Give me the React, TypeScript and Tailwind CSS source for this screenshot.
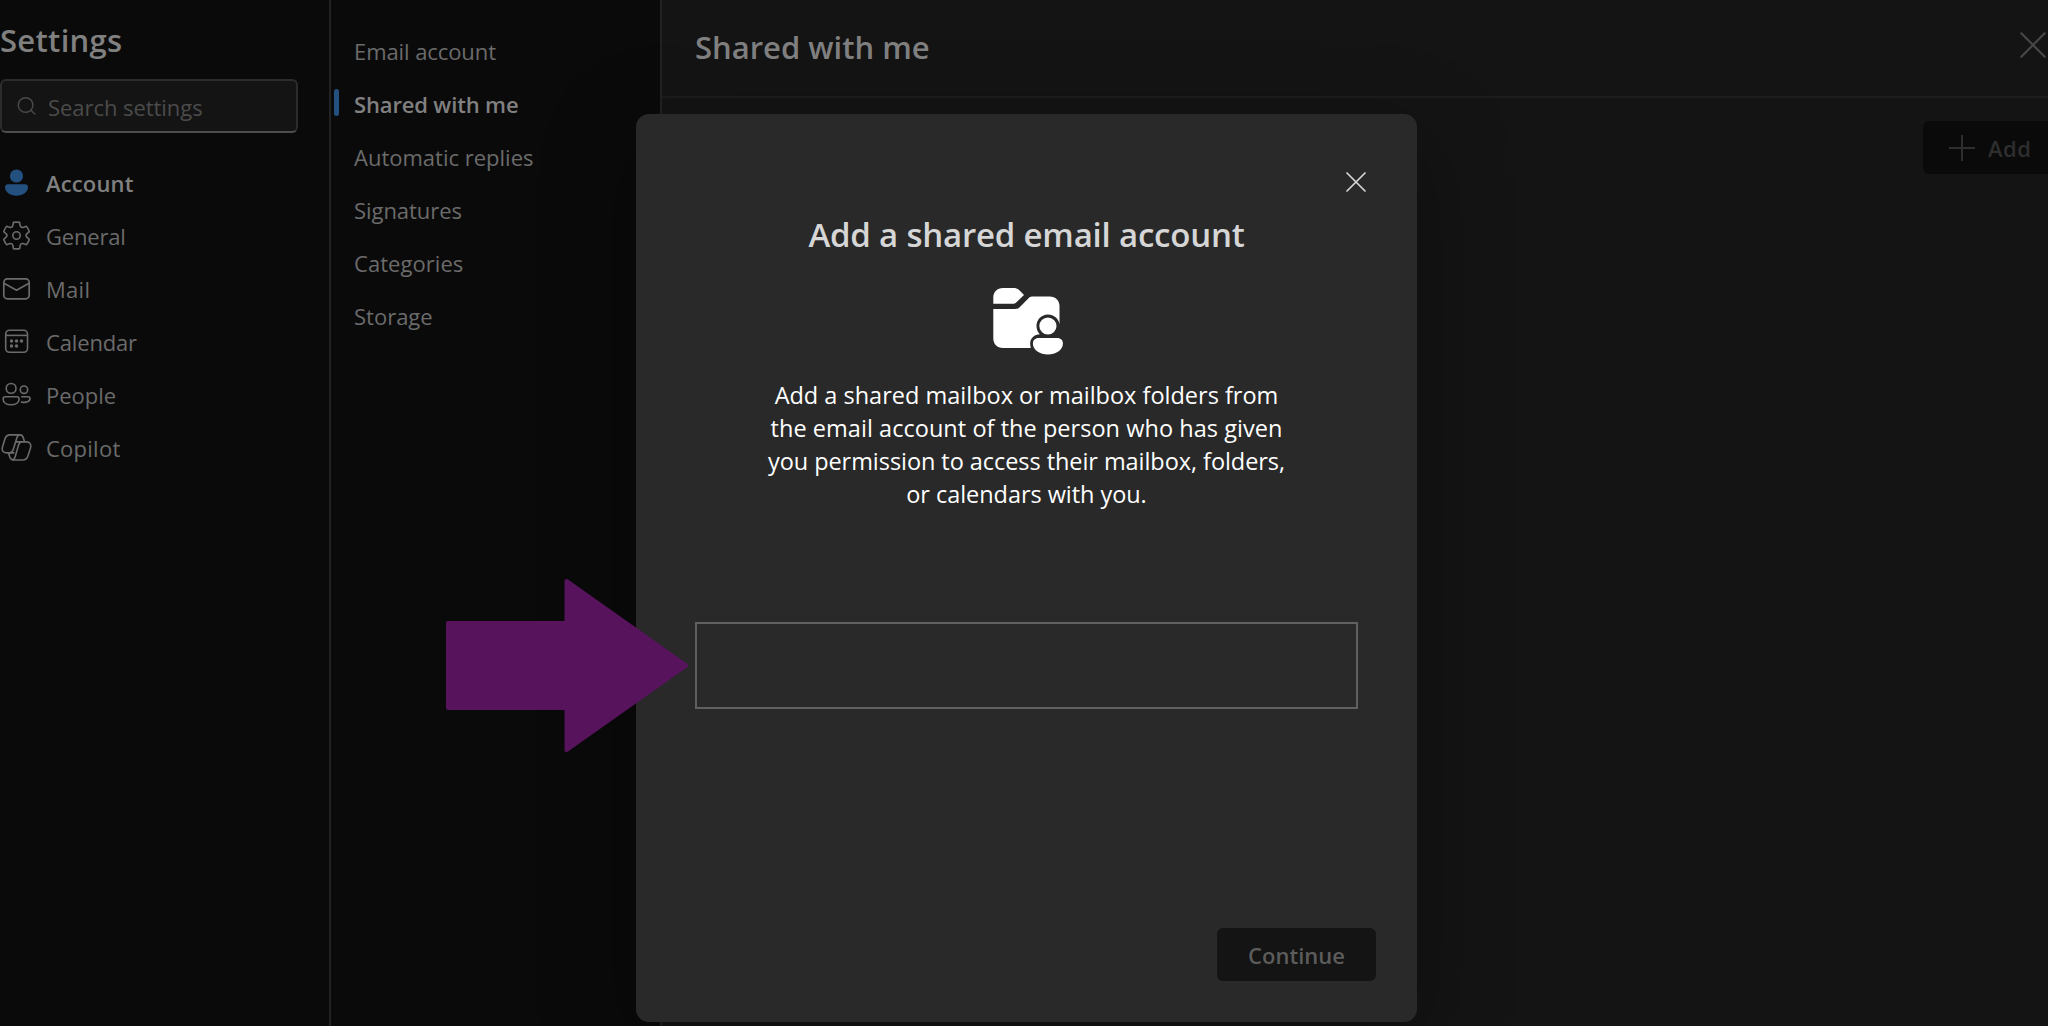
import { ReactNode } from 'react';
import clsx from 'clsx';

interface IconProps {
  className?: string;
}

function PersonIcon({ className }: IconProps) {
  return (
    <svg viewBox="0 0 32 32" className={className} fill="currentColor">
      <circle cx="16.5" cy="9" r="6.6" />
      <path d="M8 17.3H25C26.7 17.3 28 18.5 28 20.1C28 25.3 23 28.7 16.5 28.7C10 28.7 5 25.3 5 20.1C5 18.5 6.3 17.3 8 17.3Z" />
    </svg>
  );
}

function GearIcon({ className }: IconProps) {
  return (
    <svg viewBox="0 0 32 32" className={className} fill="none" stroke="currentColor" strokeWidth="1.6" strokeLinejoin="round">
      <path d="M13.4 2.4Q16.5 1.8 19.6 2.4L20.2 5.8Q20.9 7.8 23 7.4L26.3 6.3Q28.5 8.7 29.3 11.7L26.8 13.8Q25.3 15.5 26.8 17.2L29.3 19.3Q28.5 22.3 26.3 24.7L23 23.6Q20.9 23.2 20.2 25.2L19.6 28.6Q16.5 29.2 13.4 28.6L12.8 25.2Q12.1 23.2 10 23.6L6.7 24.7Q4.5 22.3 3.7 19.3L6.2 17.2Q7.7 15.5 6.2 13.8L3.7 11.7Q4.5 8.7 6.7 6.3L10 7.4Q12.1 7.8 12.8 5.8Z" />
      <circle cx="16.5" cy="15.5" r="3.7" />
    </svg>
  );
}

function MailIcon({ className }: IconProps) {
  return (
    <svg viewBox="0 0 32 32" className={className} fill="none" stroke="currentColor" strokeWidth="1.7" strokeLinejoin="round">
      <rect x="3.8" y="5.8" width="25.4" height="20" rx="3.6" />
      <path d="M4 10.3L16.5 17.2L29 10.3" />
    </svg>
  );
}

function CalendarIcon({ className }: IconProps) {
  return (
    <svg viewBox="0 0 32 32" className={className} fill="none" stroke="currentColor" strokeWidth="1.6">
      <rect x="5.7" y="4.3" width="21.8" height="22" rx="3.8" />
      <path d="M5.7 9.4H27.5" />
      <g fill="currentColor" stroke="none">
        <circle cx="11.5" cy="15.1" r="1.75" />
        <circle cx="16.5" cy="15.1" r="1.75" />
        <circle cx="21.5" cy="15.1" r="1.75" />
        <circle cx="11.5" cy="20.1" r="1.75" />
        <circle cx="16.5" cy="20.1" r="1.75" />
      </g>
    </svg>
  );
}

function PeopleIcon({ className }: IconProps) {
  return (
    <svg viewBox="0 0 32 32" className={className} fill="none" stroke="currentColor" strokeWidth="1.6" strokeLinecap="round">
      <circle cx="11.1" cy="9.4" r="4.9" />
      <circle cx="24" cy="10.7" r="3.7" />
      <path d="M5.5 17.7H16.7C18.1 17.7 19.1 18.7 19.1 19.9C19.1 23.9 15.3 25.7 11.1 25.7C6.9 25.7 3.1 23.9 3.1 19.9C3.1 18.7 4.1 17.7 5.5 17.7Z" />
      <path d="M21.8 17.7H28C29.2 17.7 30 18.5 30 19.6C30 22.9 26.4 23.8 21.6 23.1" />
    </svg>
  );
}

function CopilotIcon({ className }: IconProps) {
  return (
    <svg viewBox="0 0 32 32" className={className} fill="none" stroke="currentColor" strokeWidth="1.6" strokeLinejoin="round">
      <path d="M9.8 2.9H20C21.9 2.9 22.8 4.1 23.3 5.7L24.6 9.9H26.4C30 9.9 31.4 12.7 30.5 15.9L28 23.7C27.1 26.6 25.4 28 22.8 28H13.2C11.1 28 10.3 26.6 9.8 25.1L8.5 20.9H6.4C2.8 20.9 1.6 18.2 2.5 15L4.8 7.3C5.7 4.3 7.3 2.9 9.8 2.9Z" />
      <path d="M20 2.9C18.2 2.9 17.4 4.1 16.9 5.7L13.4 17C12.6 19.7 11.4 20.9 8.5 20.9" />
      <path d="M24.6 9.9H22C20.2 9.9 19.2 11 18.6 12.9L15.3 24.3C14.7 26.5 14.2 28 12.4 28" />
      <path d="M15.6 9.9H22M8.5 20.9H14.4" />
    </svg>
  );
}

function SearchIcon({ className }: IconProps) {
  return (
    <svg viewBox="0 0 20 20" className={className} fill="none" stroke="currentColor" strokeWidth="1.4" strokeLinecap="round">
      <circle cx="8.6" cy="9" r="7.3" />
      <path d="M13.8 14.2L17.9 18" />
    </svg>
  );
}

function SharedFolderIcon({ className }: IconProps) {
  return (
    <svg viewBox="0 0 72 68" className={className} fill="currentColor">
      <path d="M1.3 16.7V10.5C1.3 5 5.3 1 10.8 1H21.5C24 1 25.8 1.8 27.6 3.5L32 8L24.2 15.6C23.4 16.4 22.8 16.7 21.8 16.7Z" />
      <path d="M1.3 22H22.8C25 22 26.4 21.4 27.9 19.9L36.3 11.4C37.5 10.2 38.5 9.5 40 9.5H57.7C63.5 9.5 67.5 13.4 67.5 19V37.5C66.8 31.9 61.9 27.6 55.9 27.6C49.6 27.6 44.5 32.7 44.5 39C44.5 42.3 45.7 45 47.8 47.2C42.5 47.4 38.2 51 38.2 56.5C38.2 58.1 38.4 59.5 38.8 61H10.8C5.3 61 1.3 57 1.3 51.5Z" />
      <circle cx="55.9" cy="39" r="8.6" />
      <path d="M46.5 51H65.3C68.7 51 70.9 53.3 70.9 56.4C70.9 63.2 63.7 67.4 55.9 67.4C48.1 67.4 40.9 63.2 40.9 56.4C40.9 53.3 43.1 51 46.5 51Z" />
    </svg>
  );
}

function CloseIcon({ className }: IconProps) {
  return (
    <svg viewBox="0 0 26 26" className={className} fill="none" stroke="currentColor" strokeWidth="2.2" strokeLinecap="round">
      <path d="M1.3 1.3L24.7 24.7M24.7 1.3L1.3 24.7" />
    </svg>
  );
}

interface NavItem {
  label: string;
  icon: ReactNode;
  tracking: string;
  active?: boolean;
}

const iconSize = 'h-8 w-8 shrink-0';

const navItems: NavItem[] = [
  { label: 'Account', icon: <PersonIcon className={clsx(iconSize, 'text-[#24507f]')} />, tracking: 'tracking-[0.15px]', active: true },
  { label: 'General', icon: <GearIcon className={iconSize} />, tracking: 'tracking-[-0.2px]' },
  { label: 'Mail', icon: <MailIcon className={iconSize} />, tracking: 'tracking-[0.3px]' },
  { label: 'Calendar', icon: <CalendarIcon className={iconSize} />, tracking: 'tracking-[-0.15px]' },
  { label: 'People', icon: <PeopleIcon className={iconSize} />, tracking: 'tracking-normal' },
  { label: 'Copilot', icon: <CopilotIcon className={iconSize} />, tracking: 'tracking-[0.25px]' },
];

const accountPages = [
  { label: 'Email account', tracking: 'tracking-[-0.08px]' },
  { label: 'Shared with me', tracking: 'tracking-[-0.15px]', active: true },
  { label: 'Automatic replies', tracking: 'tracking-normal' },
  { label: 'Signatures', tracking: 'tracking-[-0.05px]' },
  { label: 'Categories', tracking: 'tracking-[0.05px]' },
  { label: 'Storage', tracking: 'tracking-normal' },
];

const description = [
  { text: 'Add a shared mailbox or mailbox folders from', tracking: 'tracking-normal' },
  { text: 'the email account of the person who has given', tracking: 'tracking-[0.04px]' },
  { text: 'you permission to access their mailbox, folders,', tracking: 'tracking-[-0.06px]' },
  { text: 'or calendars with you.', tracking: 'tracking-[-0.05px]' },
];

function Sidebar() {
  return (
    <aside className="w-[331px] shrink-0 border-r-2 border-[#222222] bg-[#0a0a0a]">
      <h1 className="flex h-[79px] items-center pt-[2px] text-[31px] font-semibold tracking-[0.3px] text-[#808080]">
        Settings
      </h1>
      <div className="flex h-[54px] w-[298px] items-center gap-[11px] rounded-md border-2 border-[#2c2c2c] border-b-[#4d4d4d] bg-[#141414] pl-[15px]">
        <SearchIcon className="h-5 w-5 text-[#4b4b4b]" />
        <span className="pt-[2px] text-[22px] tracking-[-0.05px] text-[#4b4b4b]">Search settings</span>
      </div>
      <nav className="mt-[23px]">
        {navItems.map((item) => (
          <div
            key={item.label}
            className={clsx(
              'flex h-[53px] items-center gap-[14px] text-[22px]',
              item.active ? 'font-semibold text-[#808080]' : 'text-[#6b6b6b]'
            )}
          >
            {item.icon}
            <span className={clsx('pt-[2px]', item.tracking)}>{item.label}</span>
          </div>
        ))}
      </nav>
    </aside>
  );
}

function AccountPages() {
  return (
    <nav className="w-[331px] shrink-0 border-r-2 border-[#222222] bg-[#0a0a0a] pt-6">
      {accountPages.map((page) => (
        <div
          key={page.label}
          className={clsx(
            'flex h-[53px] items-center pl-[3px] text-[22px]',
            page.active ? 'font-semibold text-[#808080]' : 'text-[#6b6b6b]'
          )}
        >
          <span className={clsx('mb-[2px] h-[27px] w-[5px] rounded-full', page.active && 'bg-[#24507f]')} />
          <span className={clsx('ml-[15px] pt-[2px]', page.tracking)}>{page.label}</span>
        </div>
      ))}
    </nav>
  );
}

function SharedWithMe() {
  return (
    <main className="flex-1 bg-[#141414]">
      <header className="flex h-[98px] items-center justify-between border-b-2 border-[#1d1d1d] pr-[2px] pl-[33px]">
        <h2 className="pb-[2px] text-[31px] font-semibold text-[#808080]">Shared with me</h2>
        <CloseIcon className="mb-[6px] h-[26px] w-[26px] text-[#474747]" />
      </header>
      <div className="flex justify-end pt-[23px]">
        <button className="flex h-[53px] w-[125px] items-center gap-[13px] rounded-l-md bg-[#0a0a0a] pl-[26px] text-[22px] font-semibold text-[#2e2e2e]">
          <svg viewBox="0 0 26 26" className="h-[26px] w-[26px]" stroke="currentColor" strokeWidth="2">
            <path d="M13 0V26M0 13H26" />
          </svg>
          <span className="pt-[2px] tracking-[0.5px]">Add</span>
        </button>
      </div>
    </main>
  );
}

function AddSharedAccountDialog() {
  return (
    <div
      role="dialog"
      className="absolute top-[114px] left-[636px] flex h-[908px] w-[781px] flex-col items-center rounded-[13px] bg-[#292929] shadow-[0_26px_90px_rgba(0,0,0,0.35)]"
    >
      <button className="mt-[58px] mr-[51px] self-end text-[#d6d6d6]">
        <CloseIcon className="h-5 w-5" />
      </button>
      <h2 className="mt-[18px] text-[33px] leading-[50px] font-semibold tracking-[-0.2px] text-[#d6d6d6]">
        Add a shared email account
      </h2>
      <SharedFolderIcon className="mt-[27px] ml-[2px] h-[68px] w-[72px] text-white" />
      <p className="mt-6 text-center text-[23.5px] leading-[33px] text-white">
        {description.map((line) => (
          <span key={line.text} className={clsx('block', line.tracking)}>
            {line.text}
          </span>
        ))}
      </p>
      <input className="mt-[111px] h-[87px] w-[663px] border-2 border-[#606060] bg-[#292929] px-4 text-[22px] text-white outline-none" />
      <button
        disabled
        className="mt-auto mr-[41px] mb-[41px] h-[53px] w-[159px] self-end rounded-md bg-[#141414] pt-[2px] text-[22px] font-semibold text-[#5c5c5c]"
      >
        Continue
      </button>
    </div>
  );
}

function CalloutArrow() {
  return (
    <svg viewBox="0 0 243 176" className="absolute top-[577px] left-[446px] h-[176px] w-[243px]">
      <path
        d="M2 46H120.5V4L240 88.5L120.5 173V131H2Z"
        fill="#57135c"
        stroke="#57135c"
        strokeWidth="4"
        strokeLinejoin="round"
      />
    </svg>
  );
}

export default function App() {
  return (
    <div className="relative flex h-[1026px] w-[2048px] overflow-hidden bg-[#141414] font-['Open_Sans','Noto_Sans',sans-serif]">
      <Sidebar />
      <AccountPages />
      <SharedWithMe />
      <AddSharedAccountDialog />
      <CalloutArrow />
    </div>
  );
}
